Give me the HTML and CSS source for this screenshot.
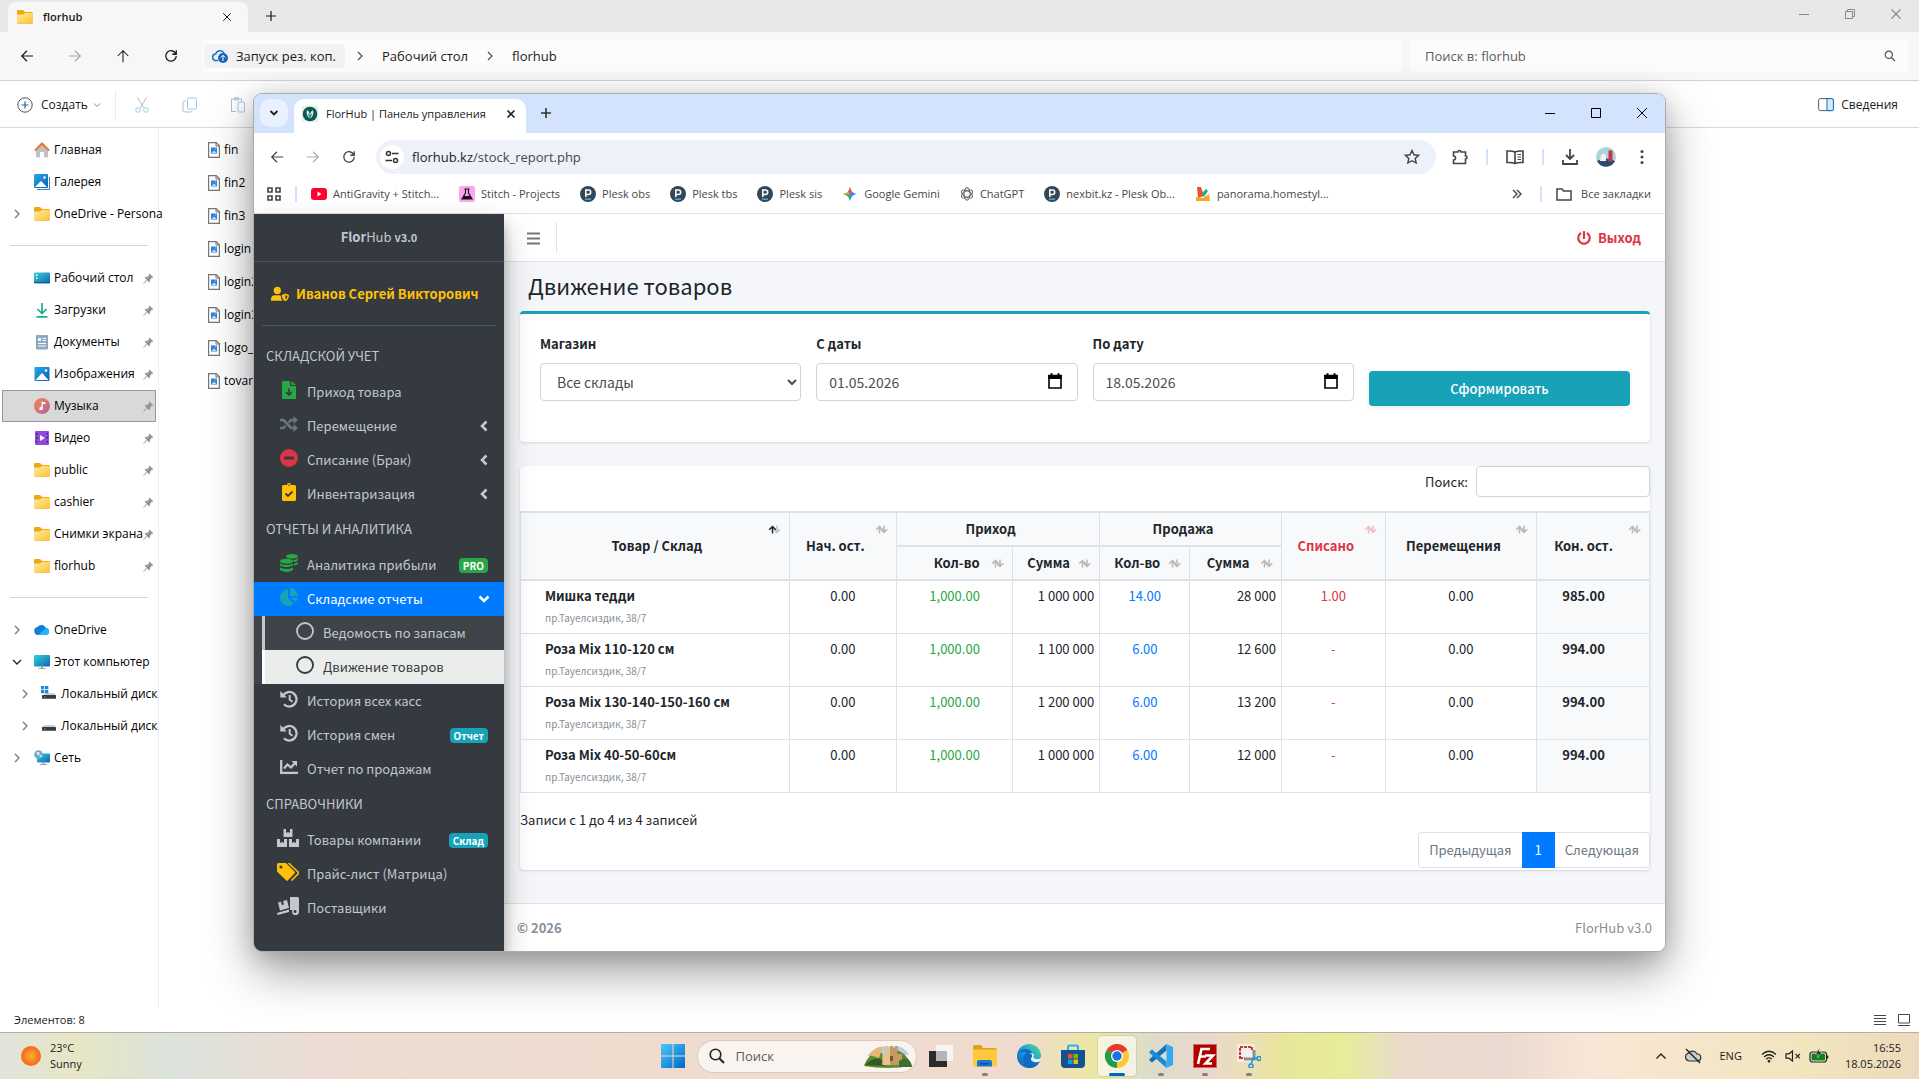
FILE: index.html
```html
<!DOCTYPE html>
<html lang="ru">
<head>
<meta charset="utf-8">
<title>FlorHub | Панель управления</title>
<link rel="stylesheet" href="styles.css">
</head>
<body>
<svg class="sprite" aria-hidden="true">
  <defs>
    <linearGradient id="gFolder" x1="0" y1="0" x2="1" y2="1"><stop offset="0" stop-color="#ffe9a6"/><stop offset="1" stop-color="#fdc32f"/></linearGradient>
    <linearGradient id="gBlue" x1="0" y1="0" x2="1" y2="1"><stop offset="0" stop-color="#27a9ec"/><stop offset="1" stop-color="#0560b6"/></linearGradient>
    <linearGradient id="gTeal" x1="0" y1="0" x2="1" y2="1"><stop offset="0" stop-color="#34d3e0"/><stop offset="1" stop-color="#0f63ad"/></linearGradient>
    <linearGradient id="gWin" x1="0" y1="0" x2="1" y2="1"><stop offset="0" stop-color="#4cc8fb"/><stop offset="1" stop-color="#0067c8"/></linearGradient>
    <linearGradient id="gMusic" x1="0" y1="0" x2="1" y2="1"><stop offset="0" stop-color="#f28a4b"/><stop offset="1" stop-color="#b0629f"/></linearGradient>
    <linearGradient id="gEdge" x1="0" y1="1" x2="1" y2="0"><stop offset="0" stop-color="#0c59a4"/><stop offset=".5" stop-color="#1b9de2"/><stop offset="1" stop-color="#5fdc7c"/></linearGradient>
  </defs>
  <symbol id="folder" viewBox="0 0 16 14"><path d="M1 0h5l2 2h6.500a1.500 1.500 0 0 1 1.500 1.500V6H0V1a1 1 0 0 1 1-1z" fill="#f0a80c"/><path d="M0 4.500h6l2-1.500h7a1 1 0 0 1 1 1v8.500a1 1 0 0 1-1 1H1a1 1 0 0 1-1-1z" fill="url(#gFolder)"/><path d="M0 12v.5a1 1 0 0 0 1 1h14a1 1 0 0 0 1-1V12a1 1 0 0 1-1 1H1a1 1 0 0 1-1-1z" fill="#e9a820"/></symbol>
  <symbol id="pin" viewBox="0 0 12 12"><path d="M7.200.6 11.400 4.800 10.300 5.300 9.600 5.200 7.900 7 7.700 9.400 6.600 10 4.500 7.900 1 11.400.3 11.500.4 10.800 3.900 7.300 2 5.300 2.500 4.300 5 4.100 6.800 2.300 6.600 1.500z" fill="#8d979f"/></symbol>
  <symbol id="chev" viewBox="0 0 8 12"><path d="M2 2l4 4-4 4" fill="none" stroke="currentColor" stroke-width="1.300"/></symbol>
  <symbol id="home" viewBox="0 0 16 16"><path d="M2 7l6-5 6 5v8.500h-4V10H6v5.500H2z" fill="#bfc2c4"/><path d="M.8 8.600 8 1.500l7.200 7.100" fill="none" stroke="#e8742a" stroke-width="2"/></symbol>
  <symbol id="picture" viewBox="0 0 16 16"><rect x=".5" y="1" width="15" height="14" rx="1" fill="url(#gBlue)"/><path d="M1.500 14 8 7l6.500 7z" fill="#fff"/><circle cx="12" cy="4.500" r="1.300" fill="#fff"/></symbol>
  <symbol id="gallery" viewBox="0 0 16 16"><path d="M3 15h12V3h1v13H3z" fill="#2f86c8"/><rect y="0" width="14" height="14" rx="1" fill="url(#gBlue)"/><path d="M1 13l6-6 6 6z" fill="#fff"/><circle cx="10.500" cy="3.500" r="1.200" fill="#fff"/></symbol>
  <symbol id="desk" viewBox="0 0 16 16"><rect y="2.500" width="16" height="11" rx="1" fill="url(#gTeal)"/><path d="M2 4.500h1.500V6H2zM2 7.500h1.500V9H2z" fill="#fff"/><path d="M0 12h16v.8H0z" fill="#0d4f86"/></symbol>
  <symbol id="down" viewBox="0 0 16 16"><path d="M8 1v10M3.500 7 8 11.500 12.500 7M2.500 14.800h11" fill="none" stroke="#1bb08c" stroke-width="1.700"/></symbol>
  <symbol id="doc" viewBox="0 0 16 16"><rect x="2" y="1" width="12" height="14.500" rx="1" fill="#8ea8c0"/><path d="M4 4h3v3H4zM8.500 4H12v1H8.500zM8.500 6H12v1H8.500zM4 9h8v1H4zM4 11.500h8v1H4z" fill="#fff"/></symbol>
  <symbol id="music" viewBox="0 0 16 16"><circle cx="8" cy="8" r="8" fill="url(#gMusic)"/><path d="M7.500 3.500l4 1v1.800L8.800 5.700v4.800a1.800 1.800 0 1 1-1.300-1.700z" fill="#fff"/></symbol>
  <symbol id="video" viewBox="0 0 16 16"><rect x="1" y="1" width="14" height="14" rx="1" fill="#8e4ae0"/><path d="M2 3h1.500v1.500H2zM2 7h1.500v1.500H2zM2 11h1.500v1.500H2zM12.500 3H14v1.500h-1.500zM12.500 7H14v1.500h-1.500zM12.500 11H14v1.500h-1.500z" fill="#3d1d78"/><path d="M6 5l5 3-5 3z" fill="#fff"/></symbol>
  <symbol id="cloud" viewBox="0 0 16 16"><path d="M4 13a4 4 0 0 1-.6-7.900A5 5 0 0 1 12 6a3.600 3.600 0 0 1 .5 7z" fill="#1479e0"/><path d="M4 13l8-7a3.600 3.600 0 0 1 .5 7z" fill="#24b4fa"/></symbol>
  <symbol id="pc" viewBox="0 0 16 16"><rect y="1" width="16" height="11.500" rx="1" fill="url(#gTeal)"/><path d="M7 12.500h2V14h2.500v1h-7v-1H7z" fill="#97a3ab"/></symbol>
  <symbol id="disk" viewBox="0 0 16 16"><path d="M2.500 7h11L15 9.500H1z" fill="#cfcfcf"/><rect x="1" y="9" width="14" height="3.800" rx=".5" fill="#3a3a3a"/><path d="M3 10.500h1.500v1H3z" fill="#3fd94b"/></symbol>
  <symbol id="sysdisk" viewBox="0 0 16 16"><path d="M5 7h8.500L15 9.500H2z" fill="#cfcfcf"/><rect x="1" y="9" width="14" height="3.800" rx=".5" fill="#3a3a3a"/><path d="M3 10.500h1.500v1H3z" fill="#3fd94b"/><path d="M0 0h3.300v3.300H0zM4 0h3.300v3.300H4zM0 4h3.300v3.300H0zM4 4h3.300v3.300H4z" fill="#1889dc"/></symbol>
  <symbol id="net" viewBox="0 0 16 16"><rect x="3" y="3.500" width="13" height="9" rx="1" fill="url(#gTeal)"/><path d="M8.500 12.500h2V14H13v1H6v-1h2.500z" fill="#97a3ab"/><circle cx="4.500" cy="4.500" r="4.300" fill="#6fa8c8"/><path d="M2 2.500l3-.5 1 2-2 1.500zM5 6l3-1-.5 2.500z" fill="#dff0f6"/></symbol>
  <symbol id="imgfile" viewBox="0 0 12 16"><path d="M.6.6h7.600l3.200 3.200v11.600H.6z" fill="#fff" stroke="#777" stroke-width="1.200"/><path d="M8 .6V4h3.400" fill="none" stroke="#777"/><rect x="3" y="5.500" width="6" height="6" fill="#2a86dc"/><path d="M3.500 11 6 8.500l2.500 2.500z" fill="#bfe3fb"/><circle cx="7.500" cy="7" r=".8" fill="#bda0f0"/></symbol>
  <symbol id="back" viewBox="0 0 16 16"><path d="M15 8H2M8 2 2 8l6 6" fill="none" stroke="currentColor" stroke-width="1.400"/></symbol>
  <symbol id="fwd" viewBox="0 0 16 16"><path d="M1 8h13M8 2l6 6-6 6" fill="none" stroke="currentColor" stroke-width="1.400"/></symbol>
  <symbol id="reload" viewBox="0 0 16 16"><path d="M13.500 5.500A6 6 0 1 0 14 8M14 1.500v4.500H9.500" fill="none" stroke="currentColor" stroke-width="1.500"/></symbol>
  <symbol id="x" viewBox="0 0 12 12"><path d="M1.500 1.500l9 9M10.500 1.500l-9 9" stroke="currentColor" stroke-width="1.200"/></symbol>
  <symbol id="plus" viewBox="0 0 12 12"><path d="M6 1v10M1 6h10" stroke="currentColor" stroke-width="1.200"/></symbol>
  <symbol id="plesk" viewBox="0 0 16 16"><circle cx="8" cy="8" r="8" fill="#33475b"/><path d="M5.800 11V4h2.700a2.200 2.200 0 0 1 0 4.400H6" fill="none" stroke="#fff" stroke-width="1.500"/><path d="M5 13.200h6" stroke="#53bce6" stroke-width="1.300"/></symbol>
  <symbol id="sort" viewBox="0 0 13 9"><path d="M4.500 8.500V1.500M1.200 4.800l3.300-3.300 3.300 3.300M9 .5v7M5.800 4.200 9 7.500l3.200-3.300" fill="none" stroke="currentColor" stroke-width="1.500"/></symbol>
  <symbol id="angle" viewBox="0 0 8 12"><path d="M6.500 1.500 2 6l4.500 4.500" fill="none" stroke="currentColor" stroke-width="2.600"/></symbol>
  <symbol id="ring" viewBox="0 0 18 18"><circle cx="9" cy="9" r="8" fill="none" stroke="currentColor" stroke-width="1.800"/></symbol>
  <symbol id="history" viewBox="0 0 18 18"><path d="M3.200 5.200A7.300 7.300 0 1 1 4 14.300" fill="none" stroke="currentColor" stroke-width="2.300"/><path d="M.3 1v6.500h6.500z" fill="currentColor"/><path d="M9.700 5v4.800l2.800 2" fill="none" stroke="currentColor" stroke-width="2"/></symbol>
  <symbol id="cal" viewBox="0 0 14 16"><path d="M1 2.500h12V15H1z" fill="none" stroke="#000" stroke-width="1.600"/><path d="M.2 2h13.600v4H.2zM2.500.3h2V3h-2zM9.500.3h2V3h-2z"/></symbol>
</svg>

<div class="desktop">
  <main class="explorer">
    <div class="ex-tabs">
      <div class="ex-tab"><svg class="i16"><use href="#folder"/></svg><span>florhub</span><button class="ib push" aria-label="Закрыть вкладку"><svg class="i10"><use href="#x"/></svg></button></div>
      <button class="ib ex-plus" aria-label="Новая вкладка"><svg class="i12"><use href="#plus"/></svg></button>
      <div class="ex-winbtns">
        <button class="ib" aria-label="Свернуть"><svg class="i10" viewBox="0 0 10 10"><path d="M0 5.500h10" stroke="#888"/></svg></button>
        <button class="ib" aria-label="Восстановить"><svg class="i10" viewBox="0 0 10 10"><path d="M.5 2.500h7v7h-7zM2.500 2V.5h7v7H8" fill="none" stroke="#888"/></svg></button>
        <button class="ib" aria-label="Закрыть"><svg class="i12"><use href="#x"/></svg></button>
      </div>
    </div>
    <div class="ex-nav">
      <div class="ex-arrows">
        <button class="ib" aria-label="Назад"><svg class="i14"><use href="#back"/></svg></button>
        <button class="ib dim" aria-label="Вперед"><svg class="i14"><use href="#fwd"/></svg></button>
        <button class="ib" aria-label="Вверх"><svg class="i14" viewBox="0 0 16 16"><path d="M8 15V2M2 8l6-6 6 6" fill="none" stroke="currentColor" stroke-width="1.200"/></svg></button>
        <button class="ib" aria-label="Обновить"><svg class="i14"><use href="#reload"/></svg></button>
      </div>
      <div class="ex-path">
        <a class="chip" href="#"><svg class="i16" viewBox="0 0 16 16"><path d="M6 12.500H4a3.200 3.200 0 0 1-.3-6.400A4.500 4.500 0 0 1 12 5" fill="none" stroke="#1a6fc4" stroke-width="1.500"/><circle cx="11" cy="10" r="5" fill="#1565b8"/><path d="M11 13V7.500M8.800 9.500 11 7.300l2.200 2.200" fill="none" stroke="#fff"/></svg>Запуск рез. коп.</a>
        <svg class="crumb"><use href="#chev"/></svg><a href="#">Рабочий стол</a>
        <svg class="crumb"><use href="#chev"/></svg><a href="#">florhub</a>
      </div>
      <label class="ex-search"><input type="text" placeholder="Поиск в: florhub" aria-label="Поиск в: florhub"><svg class="i12" viewBox="0 0 12 12"><circle cx="4.800" cy="4.800" r="3.600" fill="none" stroke="#555" stroke-width="1.200"/><path d="M7.500 7.500 11 11" stroke="#555" stroke-width="1.200"/></svg></label>
    </div>
    <div class="ex-cmd">
      <button class="ib create"><svg class="i16" viewBox="0 0 16 16"><circle cx="8" cy="8" r="7.200" fill="none" stroke="#555"/><path d="M8 4.500v7M4.500 8h7" stroke="#0f6cbd" stroke-width="1.200"/></svg>Создать<svg class="i8" viewBox="0 0 8 8"><path d="M1 2.500l3 3 3-3" fill="none" stroke="#888"/></svg></button>
      <span class="sep"></span>
      <div class="ex-tools">
        <svg class="i16" viewBox="0 0 16 16"><path d="M3.500.5 10 11M12.500.5 6 11" fill="none" stroke="#bbb"/><circle cx="4" cy="13" r="2.300" fill="none" stroke="#9ccbee"/><circle cx="12" cy="13" r="2.300" fill="none" stroke="#9ccbee"/></svg>
        <svg class="i16" viewBox="0 0 16 16"><path d="M4 4H2.500A1.500 1.500 0 0 0 1 5.500V13a2 2 0 0 0 2 2h5.500a1.500 1.500 0 0 0 1.500-1.500" fill="none" stroke="#bbb"/><rect x="5.500" y="1" width="9" height="11" rx="1.500" fill="none" stroke="#9ccbee"/></svg>
        <svg class="i16" viewBox="0 0 16 16"><path d="M6 14.500H1.500V2h10v2M4.500.8h4v2h-4z" fill="none" stroke="#bbb"/><rect x="8" y="5" width="6.500" height="10" rx="1" fill="none" stroke="#9ccbee"/></svg>
      </div>
      <button class="ib details"><svg class="i16" viewBox="0 0 16 14"><rect x=".6" y=".6" width="14.800" height="12" rx="2" fill="none" stroke="#555"/><path d="M9 .6h5a1.500 1.500 0 0 1 1.400 1.500v9a1.500 1.500 0 0 1-1.400 1.500H9z" fill="#d6eafa" stroke="#0f6cbd"/></svg>Сведения</button>
    </div>
    <div class="ex-body">
      <nav class="ex-tree">
        <a href="#"><svg class="i16"><use href="#home"/></svg><span>Главная</span></a>
        <a href="#"><svg class="i16"><use href="#gallery"/></svg><span>Галерея</span></a>
        <a href="#" class="branch"><svg class="tw"><use href="#chev"/></svg><svg class="i16"><use href="#folder"/></svg><span>OneDrive - Persona</span></a>
        <hr>
        <a href="#"><svg class="i16"><use href="#desk"/></svg><span>Рабочий стол</span><svg class="pin"><use href="#pin"/></svg></a>
        <a href="#"><svg class="i16"><use href="#down"/></svg><span>Загрузки</span><svg class="pin"><use href="#pin"/></svg></a>
        <a href="#"><svg class="i16"><use href="#doc"/></svg><span>Документы</span><svg class="pin"><use href="#pin"/></svg></a>
        <a href="#"><svg class="i16"><use href="#picture"/></svg><span>Изображения</span><svg class="pin"><use href="#pin"/></svg></a>
        <a href="#" class="current"><svg class="i16"><use href="#music"/></svg><span>Музыка</span><svg class="pin"><use href="#pin"/></svg></a>
        <a href="#"><svg class="i16"><use href="#video"/></svg><span>Видео</span><svg class="pin"><use href="#pin"/></svg></a>
        <a href="#"><svg class="i16"><use href="#folder"/></svg><span>public</span><svg class="pin"><use href="#pin"/></svg></a>
        <a href="#"><svg class="i16"><use href="#folder"/></svg><span>cashier</span><svg class="pin"><use href="#pin"/></svg></a>
        <a href="#"><svg class="i16"><use href="#folder"/></svg><span>Снимки экрана</span><svg class="pin"><use href="#pin"/></svg></a>
        <a href="#"><svg class="i16"><use href="#folder"/></svg><span>florhub</span><svg class="pin"><use href="#pin"/></svg></a>
        <hr>
        <a href="#" class="branch"><svg class="tw"><use href="#chev"/></svg><svg class="i16"><use href="#cloud"/></svg><span>OneDrive</span></a>
        <a href="#" class="branch"><svg class="tw open"><use href="#chev"/></svg><svg class="i16"><use href="#pc"/></svg><span>Этот компьютер</span></a>
        <a href="#" class="branch deep"><svg class="tw"><use href="#chev"/></svg><svg class="i16"><use href="#sysdisk"/></svg><span>Локальный диск</span></a>
        <a href="#" class="branch deep"><svg class="tw"><use href="#chev"/></svg><svg class="i16"><use href="#disk"/></svg><span>Локальный диск</span></a>
        <a href="#" class="branch"><svg class="tw"><use href="#chev"/></svg><svg class="i16"><use href="#net"/></svg><span>Сеть</span></a>
      </nav>
      <ul class="ex-files">
        <li><svg><use href="#imgfile"/></svg>fin</li>
        <li><svg><use href="#imgfile"/></svg>fin2</li>
        <li><svg><use href="#imgfile"/></svg>fin3</li>
        <li><svg><use href="#imgfile"/></svg>login</li>
        <li><svg><use href="#imgfile"/></svg>login2</li>
        <li><svg><use href="#imgfile"/></svg>login3</li>
        <li><svg><use href="#imgfile"/></svg>logo_</li>
        <li><svg><use href="#imgfile"/></svg>tovaro</li>
      </ul>
    </div>
    <div class="ex-status"><span>Элементов: 8</span><span class="views">
      <svg class="i12" viewBox="0 0 12 12"><path d="M0 1.500h12M0 4.500h12M0 7.500h12M0 10.500h12" stroke="#444"/></svg>
      <svg class="i12" viewBox="0 0 12 12"><path d="M.5.5h11v8.500H.5zM0 11.500h12" fill="none" stroke="#444"/></svg></span></div>
  </main>

  <section class="chrome">
    <div class="ch-strip">
      <button class="ib ch-menu" aria-label="Поиск вкладок"><svg class="i10" viewBox="0 0 10 10"><path d="M1.500 3 5 6.500 8.500 3" fill="none" stroke="#1f1f1f" stroke-width="1.800"/></svg></button>
      <div class="ch-tab">
        <svg class="i16" viewBox="0 0 16 16"><rect width="16" height="16" fill="#e9eeee"/><circle cx="8" cy="8" r="7.300" fill="#0b5a56"/><path d="M5 4q-1.500 6 3 8.500Q12.500 10 11 4 9 5 8 8 7 5 5 4z" fill="#d9ecea"/><path d="M8 12V7.500M6 8l2 3 2-3" fill="none" stroke="#0b5a56" stroke-width=".8"/></svg>
        <span>FlorHub | Панель управления</span>
        <button class="ib push" aria-label="Закрыть вкладку"><svg class="i10" viewBox="0 0 10 10"><path d="M1.500 1.500l7 7M8.500 1.500l-7 7" stroke="#1f1f1f" stroke-width="1.600"/></svg></button>
      </div>
      <button class="ib ch-plus" aria-label="Новая вкладка"><svg class="i12" viewBox="0 0 12 12"><path d="M6 1v10M1 6h10" stroke="#333" stroke-width="1.600"/></svg></button>
      <div class="ch-winbtns">
        <button class="ib" aria-label="Свернуть"><svg class="i10" viewBox="0 0 10 10"><path d="M0 5.500h10" stroke="#000"/></svg></button>
        <button class="ib" aria-label="Развернуть"><svg class="i10" viewBox="0 0 10 10"><path d="M.5.5h9v9h-9z" fill="none" stroke="#000"/></svg></button>
        <button class="ib" aria-label="Закрыть"><svg class="i10" viewBox="0 0 10 10"><path d="M0 0l10 10M10 0 0 10" stroke="#000"/></svg></button>
      </div>
    </div>
    <div class="ch-bar">
      <div class="ch-arrows">
        <button class="ib" aria-label="Назад"><svg class="i14"><use href="#back"/></svg></button>
        <button class="ib dim" aria-label="Вперед"><svg class="i14"><use href="#fwd"/></svg></button>
        <button class="ib" aria-label="Обновить"><svg class="i14"><use href="#reload"/></svg></button>
      </div>
      <div class="ch-url">
        <span class="tune"><svg class="i14" viewBox="0 0 14 14"><circle cx="3.500" cy="3.500" r="2" fill="none" stroke="#333" stroke-width="1.500"/><path d="M7 3.500h6.500M.5 10.500H7" stroke="#333" stroke-width="1.500"/><circle cx="10.500" cy="10.500" r="2" fill="none" stroke="#333" stroke-width="1.500"/></svg></span>
        <span class="addr">florhub.kz<i>/stock_report.php</i></span>
        <svg class="i16 push" viewBox="0 0 16 16"><path d="M8 1.500l2 4.300 4.600.5-3.400 3.100 1 4.600L8 11.700 3.800 14l1-4.600L1.400 6.300 6 5.800z" fill="none" stroke="#444" stroke-width="1.400"/></svg>
      </div>
      <div class="ch-ext">
        <svg class="i16" viewBox="0 0 16 16"><path d="M1.500 3H6a1.500 1.500 0 0 1 3 0h4.500v4a1.500 1.500 0 0 1 0 3v4.500h-12V11a2 2 0 0 0 0-4z" fill="none" stroke="#444" stroke-width="1.600"/></svg>
        <span class="vsep"></span>
        <svg class="i18" viewBox="0 0 18 16"><path d="M9 3C7 2 4 1.800 1 2v11.500c3-.2 6 0 8 1 2-1 5-1.200 8-1V2c-3-.2-6 0-8 1zv11" fill="none" stroke="#444" stroke-width="1.600"/><path d="M11.500 5.500h3.500M11.500 8h3.500M11.500 10.500h3.500" stroke="#444"/></svg>
        <span class="vsep"></span>
        <svg class="i16" viewBox="0 0 16 16"><path d="M8 0v9.500M4 6l4 4 4-4M1 11v4h14v-4" fill="none" stroke="#444" stroke-width="1.800"/></svg>
        <svg class="i20" viewBox="0 0 20 20"><circle cx="10" cy="10" r="10" fill="#a9d5da"/><path d="M1 14q9-5 18 0a10 10 0 0 1-18 0z" fill="#2c4a6e"/><path d="M12.500 3.500h4v11h-4z" fill="#c8374a"/><path d="M5 8q3-3 5 0v6H4z" fill="#f2f2f0"/></svg>
        <svg class="i16" viewBox="0 0 16 16"><circle cx="8" cy="2.500" r="1.500" fill="#444"/><circle cx="8" cy="8" r="1.500" fill="#444"/><circle cx="8" cy="13.500" r="1.500" fill="#444"/></svg>
      </div>
    </div>
    <nav class="ch-marks">
      <svg class="i14" viewBox="0 0 14 14"><path d="M1 1h4v4H1zM9 1h4v4H9zM1 9h4v4H1zM9 9h4v4H9z" fill="none" stroke="#444" stroke-width="1.600"/></svg>
      <span class="vsep"></span>
      <div class="marks">
        <a href="#"><svg class="i16" viewBox="0 0 16 16"><rect y="2" width="16" height="12" rx="3" fill="#ff0033"/><path d="M6.500 5.500v5l4-2.500z" fill="#fff"/></svg>AntiGravity + Stitch...</a>
        <a href="#"><svg class="i16" viewBox="0 0 16 16"><rect width="16" height="16" rx="2" fill="#f9a8f0"/><path d="M6.500 3v4L3 13h10L9.500 7V3M5.500 3h5" fill="none" stroke="#1b1020" stroke-width="1.200"/><path d="M5 10h6l2 3H3z" fill="#1b1020"/></svg>Stitch - Projects</a>
        <a href="#"><svg class="i16"><use href="#plesk"/></svg>Plesk obs</a>
        <a href="#"><svg class="i16"><use href="#plesk"/></svg>Plesk tbs</a>
        <a href="#"><svg class="i16"><use href="#plesk"/></svg>Plesk sis</a>
        <a href="#"><svg class="i16" viewBox="0 0 16 16"><path d="M8 1q1 6 7 7-6 1-7 7-1-6-7-7 6-1 7-7z" fill="#4285f4"/><path d="M8 1q-1 6-7 7l7 0z" fill="#f9b32b"/><path d="M8 1q.5 3 2 5L8 8 6 6q1.500-2 2-5z" fill="#ea4e3f"/><path d="M1 8q6 1 7 7V8z" fill="#35b26b"/></svg>Google Gemini</a>
        <a href="#"><svg class="i14" viewBox="0 0 16 16"><g fill="none" stroke="#666" stroke-width="1.300"><ellipse cx="8" cy="8" rx="3.500" ry="7"/><ellipse cx="8" cy="8" rx="3.500" ry="7" transform="rotate(60 8 8)"/><ellipse cx="8" cy="8" rx="3.500" ry="7" transform="rotate(120 8 8)"/></g></svg>ChatGPT</a>
        <a href="#"><svg class="i16"><use href="#plesk"/></svg>nexbit.kz - Plesk Ob...</a>
        <a href="#"><svg class="i16" viewBox="0 0 16 16"><path d="M2 1l4 0 3 9-6 2z" fill="#e8542c"/><path d="M7 7l4-4 2 2-4 6z" fill="#2aa6a0"/><path d="M1 11l7 1 6-4 1 7H1z" fill="#f6a81c"/></svg>panorama.homestyl...</a>
      </div>
      <button class="ib push more" aria-label="Ещё закладки"><svg class="i10" viewBox="0 0 10 10"><path d="M1 1l4 4-4 4M5 1l4 4-4 4" fill="none" stroke="#444" stroke-width="1.400"/></svg></button>
      <span class="vsep"></span>
      <a href="#" class="all"><svg class="i16" viewBox="0 0 16 16"><path d="M1 3h5l1.500 2H15v9H1z" fill="none" stroke="#444" stroke-width="1.500"/></svg>Все закладки</a>
    </nav>

    <div class="page">
      <aside class="side">
        <a class="brand" href="#"><b>Flor</b>Hub <b class="ver">v3.0</b></a>
        <a class="user" href="#"><svg class="i18" viewBox="0 0 20 16"><circle cx="7" cy="4" r="4" fill="currentColor"/><path d="M0 15.500V14q0-4.500 4.500-4.500h5q1.500 0 1.500.6 0 3.500 1.800 5.400z" fill="currentColor"/><path d="M16 7.500l4 1.500q0 5-4 7-4-2-4-7z" fill="currentColor"/><path d="M16 9.300v4.800q2.200-1.500 2.300-4z" fill="#343a40"/></svg>Иванов Сергей Викторович</a>
        <nav class="menu">
          <h2>СКЛАДСКОЙ УЧЕТ</h2>
          <a href="#"><svg class="ic green" viewBox="0 0 18 18"><path d="M3 0h7v5h6v12a1 1 0 0 1-1 1H3a1 1 0 0 1-1-1V1a1 1 0 0 1 1-1zM11.500 0 16 4h-4.500z" fill="currentColor"/><path d="M9 7.500v6M6 11l3 3 3-3" fill="none" stroke="#343a40" stroke-width="1.600"/></svg>Приход товара</a>
          <a href="#"><svg class="ic gray" viewBox="0 0 18 18"><path d="M0 5h3.500l7.500 8h4M0 13h3.500l2-2.200M8.500 7.500 11 5h4" fill="none" stroke="currentColor" stroke-width="2.600"/><path d="M13.500 1 18 5l-4.500 4zM13.500 9l4.500 4-4.500 4z" fill="currentColor"/></svg>Перемещение<svg class="ang"><use href="#angle"/></svg></a>
          <a href="#"><svg class="ic red" viewBox="0 0 18 18"><circle cx="9" cy="9" r="9" fill="currentColor"/><rect x="4" y="7.500" width="10" height="3" rx=".5" fill="#343a40"/></svg>Списание (Брак)<svg class="ang"><use href="#angle"/></svg></a>
          <a href="#"><svg class="ic yellow" viewBox="0 0 18 18"><path d="M3.500 2H7a2 2 0 0 1 4 0h3.500A1.500 1.500 0 0 1 16 3.500v13a1.500 1.500 0 0 1-1.500 1.500h-11A1.500 1.500 0 0 1 2 16.500v-13A1.500 1.500 0 0 1 3.500 2z" fill="currentColor"/><path d="M5.500 10.500 8 13l4.500-4.500" fill="none" stroke="#343a40" stroke-width="1.800"/><circle cx="9" cy="2.200" r=".8" fill="#343a40"/></svg>Инвентаризация<svg class="ang"><use href="#angle"/></svg></a>
          <h2>ОТЧЕТЫ И АНАЛИТИКА</h2>
          <a href="#"><svg class="ic green" viewBox="0 0 18 18"><g fill="currentColor"><ellipse cx="12" cy="2.300" rx="6" ry="2.300"/><path d="M13 6q4-.3 5-1.700v2Q17 7.800 14 8zM14 9.500q3-.3 4-1.700v2q-1 1.400-4 1.700z"/><ellipse cx="6.500" cy="7.300" rx="6.500" ry="2.500"/><path d="M0 9.500q6.500 3 13 0v2q-6.500 3-13 0zM0 13.500q6.500 3 13 0V16q-6.500 4-13 0z"/></g></svg>Аналитика прибыли<span class="badge success">PRO</span></a>
          <a href="#" class="active"><svg class="ic teal" viewBox="0 0 18 18"><path d="M8 1v9l6 6A8.500 8.500 0 1 1 8 1z" fill="currentColor"/><path d="M10 0a8 8 0 0 1 8 8h-8zM10.500 9.500H18a8 8 0 0 1-2.300 5z" fill="currentColor"/></svg>Складские отчеты<svg class="ang down"><use href="#angle"/></svg></a>
          <div class="sub">
            <a href="#"><svg class="ic"><use href="#ring"/></svg>Ведомость по запасам</a>
            <a href="#" class="here"><svg class="ic"><use href="#ring"/></svg>Движение товаров</a>
          </div>
          <a href="#"><svg class="ic"><use href="#history"/></svg>История всех касс</a>
          <a href="#"><svg class="ic"><use href="#history"/></svg>История смен<span class="badge teal-bg">Отчет</span></a>
          <a href="#"><svg class="ic" viewBox="0 0 18 18"><path d="M1.200 2v12.800H18" fill="none" stroke="currentColor" stroke-width="2.300"/><path d="M4 10.500l3.500-4 3.500 3 4-4.500" fill="none" stroke="currentColor" stroke-width="2.200"/><path d="M11.500 3H17v5.500z" fill="currentColor"/></svg>Отчет по продажам</a>
          <h2>СПРАВОЧНИКИ</h2>
          <a href="#"><svg class="ic wide" viewBox="0 0 22 18"><path d="M6.500 0H9v4l2-1 2 1V0h2.500v8h-9zM0 10h3v4l2-1 2 1v-4h3v8H0zM12 10h3v4l2-1 2 1v-4h3v8H12z" fill="currentColor"/></svg>Товары компании<span class="badge teal-bg">Склад</span></a>
          <a href="#"><svg class="ic wide yellow" viewBox="0 0 22 18"><path d="M0 1.500Q0 0 1.500 0H9l8.500 8.500q1 1 0 2L11 17.300q-1 1-2 0L0 8.500z" fill="currentColor"/><path d="M11.500 0l9.500 9q1 1 0 2l-6.500 6.500" fill="none" stroke="currentColor" stroke-width="1.600"/><circle cx="4" cy="4" r="1.600" fill="#343a40"/></svg>Прайс-лист (Матрица)</a>
          <a href="#"><svg class="ic wide" viewBox="0 0 22 18"><path d="M13 0h7.500Q22 0 22 1.500V15a3.500 3.500 0 1 1-6.500-2H13zM0 16l12-3.500V15L.5 18zM1 5.500 4 4.700l1 3.500 2-1L6 4l4-1 2 8-9 2.500z" fill="currentColor"/><circle cx="18" cy="14.500" r="1.500" fill="#343a40"/></svg>Поставщики</a>
        </nav>
      </aside>
      <div class="main">
        <header class="top">
          <button class="ib burger" aria-label="Меню"><svg class="i14" viewBox="0 0 14 14"><path d="M0 2.500h13M0 7.500h13M0 12.500h13" stroke="#777" stroke-width="2"/></svg></button>
          <span class="rule"></span>
          <a class="exit" href="#"><svg class="i14" viewBox="0 0 512 512"><path fill="currentColor" d="M400 54.100c63 45 104 118.600 104 201.900 0 136.800-110.800 247.700-247.500 248C120 504.300 8.200 393 8 256.400 7.900 173.100 48.900 99.300 111.800 54.200c11.700-8.300 28-4.800 35 7.700L162.600 90c5.900 10.500 3.100 23.800-6.600 31-41.500 30.800-68 79.600-68 134.900-.1 92.300 74.500 168.100 168 168.100 91.600 0 168.600-74.200 168-169.100-.3-51.800-24.700-101.800-68.100-134-9.700-7.200-12.400-20.500-6.500-30.900l15.800-28.100c7-12.400 23.200-16.100 34.800-7.800zM296 264V24c0-13.300-10.700-24-24-24h-32c-13.300 0-24 10.700-24 24v240c0 13.300 10.700 24 24 24h32c13.300 0 24-10.700 24-24z"/></svg>Выход</a>
        </header>
        <div class="content">
          <h1>Движение товаров</h1>
          <form class="card filter">
            <div class="field"><label for="shop">Магазин</label><select id="shop"><option>Все склады</option></select></div>
            <div class="field"><label for="from">С даты</label><div class="date"><input id="from" type="text" value="01.05.2026"><svg><use href="#cal"/></svg></div></div>
            <div class="field"><label for="to">По дату</label><div class="date"><input id="to" type="text" value="18.05.2026"><svg><use href="#cal"/></svg></div></div>
            <button type="button" class="go">Сформировать</button>
          </form>
          <div class="card report">
            <div class="find"><label for="q">Поиск:</label><input id="q" type="search"></div>
            <table>
              <colgroup><col class="c1"><col class="c2"><col class="c3"><col class="c4"><col class="c5"><col class="c6"><col class="c7"><col class="c8"><col class="c9"></colgroup>
              <thead>
                <tr><th rowspan="2" class="lead">Товар / Склад<svg class="sort asc" viewBox="0 0 13 9"><path d="M9 .5v7M5.800 4.200 9 7.500l3.200-3.300" fill="none" stroke="#bfc2c5" stroke-width="1.500"/><path d="M4.500 8.500V1.500M1.200 4.800l3.300-3.300 3.300 3.300" fill="none" stroke="#212529" stroke-width="1.500"/></svg></th><th rowspan="2">Нач. ост.<svg class="sort"><use href="#sort"/></svg></th><th colspan="2">Приход</th><th colspan="2">Продажа</th><th rowspan="2" class="loss">Списано<svg class="sort"><use href="#sort"/></svg></th><th rowspan="2">Перемещения<svg class="sort"><use href="#sort"/></svg></th><th rowspan="2" class="end">Кон. ост.<svg class="sort"><use href="#sort"/></svg></th></tr>
                <tr><th class="lead">Кол-во<svg class="sort"><use href="#sort"/></svg></th><th>Сумма<svg class="sort"><use href="#sort"/></svg></th><th>Кол-во<svg class="sort"><use href="#sort"/></svg></th><th>Сумма<svg class="sort"><use href="#sort"/></svg></th></tr>
              </thead>
              <tbody>
                <tr><td class="name"><b>Мишка тедди</b><small>пр.Тауелсиздик, 38/7</small></td><td>0.00</td><td class="in">1,000.00</td><td class="sum">1 000 000</td><td class="out">14.00</td><td class="sum">28 000</td><td class="loss">1.00</td><td>0.00</td><td class="end">985.00</td></tr>
                <tr><td class="name"><b>Роза Mix 110-120 см</b><small>пр.Тауелсиздик, 38/7</small></td><td>0.00</td><td class="in">1,000.00</td><td class="sum">1 100 000</td><td class="out">6.00</td><td class="sum">12 600</td><td class="loss">-</td><td>0.00</td><td class="end">994.00</td></tr>
                <tr><td class="name"><b>Роза Mix 130-140-150-160 см</b><small>пр.Тауелсиздик, 38/7</small></td><td>0.00</td><td class="in">1,000.00</td><td class="sum">1 200 000</td><td class="out">6.00</td><td class="sum">13 200</td><td class="loss">-</td><td>0.00</td><td class="end">994.00</td></tr>
                <tr><td class="name"><b>Роза Mix 40-50-60см</b><small>пр.Тауелсиздик, 38/7</small></td><td>0.00</td><td class="in">1,000.00</td><td class="sum">1 000 000</td><td class="out">6.00</td><td class="sum">12 000</td><td class="loss">-</td><td>0.00</td><td class="end">994.00</td></tr>
              </tbody>
            </table>
            <p class="info">Записи с 1 до 4 из 4 записей</p>
            <div class="pager"><button type="button">Предыдущая</button><button type="button" class="on">1</button><button type="button">Следующая</button></div>
          </div>
        </div>
        <footer class="foot"><b>© 2026</b><span>FlorHub v3.0</span></footer>
      </div>
    </div>
  </section>

  <div class="taskbar">
    <div class="weather"><svg class="i20" viewBox="0 0 20 20"><defs><radialGradient id="sun"><stop offset="0" stop-color="#ffb02e"/><stop offset="1" stop-color="#f0681c"/></radialGradient></defs><circle cx="10" cy="10" r="10" fill="url(#sun)"/></svg><span>23°C<br>Sunny</span></div>
    <div class="tasks">
      <button class="task" aria-label="Пуск"><svg class="i24" viewBox="0 0 24 24"><path d="M0 0h11.500v11.500H0zM12.500 0H24v11.500H12.500zM0 12.500h11.500V24H0zM12.500 12.500H24V24H12.500z" fill="url(#gWin)"/></svg></button>
      <label class="tsearch"><svg class="i16" viewBox="0 0 16 16"><circle cx="6.500" cy="6.500" r="5.300" fill="none" stroke="#222" stroke-width="1.600"/><path d="M10.500 10.500 15 15" stroke="#222" stroke-width="2"/></svg><input type="text" placeholder="Поиск" aria-label="Поиск"><svg class="castle" viewBox="0 0 50 24"><path d="M4 12Q14 0 24 3q16-4 22 8z" fill="#b9cfe8"/><path d="M1 22q4-12 15-16l5 6 6-6q14-2 22 16-25 4-48 0z" fill="#5d8a2e"/><path d="M2 21q8-8 16-6l4 7z" fill="#2e5c24"/><path d="M6 11q6-9 14-8l-4 11z" fill="#e7b96f"/><path d="M22 2h3v2h2V2h3v2h2V2h3l-1 8h5v11H19V10h4z" fill="#c79a63"/><path d="M22 2h3v2h2v17h-7V10h3z" fill="#e6c490"/><path d="M27 12h3v5h-3z" fill="#7a5634"/><path d="M36 17q8-6 12 2l1 4H36z" fill="#3a7030"/></svg></label>
      <button class="task" aria-label="Представление задач"><svg class="i24" viewBox="0 0 24 24"><rect x="7" y="1" width="17" height="16" fill="#f4f4f4"/><rect y="7" width="18" height="16" fill="#2b2b2b"/><rect x="7" y="7" width="11" height="10" fill="#b5b5b5"/></svg></button>
      <button class="task run" aria-label="Проводник"><svg class="i24" viewBox="0 0 24 24"><path d="M0 3q0-2 2-2h6l2 3h12q2 0 2 2v4H0z" fill="#e0a01a"/><path d="M0 5.500h24v15q0 2-2 2H2q-2 0-2-2z" fill="#fbc93b"/><path d="M4 22.500V18q0-2 2-2h11q2 0 2 2v4.500z" fill="#1877d2"/><path d="M7 19h9v1.500H7z" fill="#0c4f96"/></svg></button>
      <button class="task" aria-label="Edge"><svg class="i24" viewBox="0 0 24 24"><circle cx="12" cy="12" r="12" fill="url(#gEdge)"/><path d="M1 9q5-6 11-3 5 3 3 7-3 3 2 5 4 1 6-1-4 8-12 7Q6 22 6 15q0-4 4-6Q5 7 1 9z" fill="#0f6ac0"/><path d="M12 9q4 1 3 4-3 3 2 5 4 1 6-1 1-1 1-4-1 3-5 2-4-1-2-4 0-2-5-2z" fill="#e9f4ee"/></svg></button>
      <button class="task" aria-label="Store"><svg class="i24" viewBox="0 0 24 24"><path d="M7 7V3q0-1.500 1.500-1.500h7Q17 1.500 17 3v4" fill="none" stroke="#25b3f0" stroke-width="2"/><path d="M0 6h24v14q0 4-4 4H4q-4 0-4-4z" fill="#15508f"/><path d="M7 10h4.500v4.500H7z" fill="#f25022"/><path d="M12.500 10H17v4.500h-4.500z" fill="#7fba00"/><path d="M7 15.500h4.500V20H7z" fill="#00a4ef"/><path d="M12.500 15.500H17V20h-4.500z" fill="#ffb900"/></svg></button>
      <button class="task run front" aria-label="Chrome"><svg class="i24" viewBox="0 0 24 24"><path d="M12 12 1.600 6A12 12 0 0 1 22.400 6z" fill="#e33b2e"/><path d="M12 12 22.400 6A12 12 0 0 1 12 24z" fill="#fcc934"/><path d="M12 12v12A12 12 0 0 1 1.600 6z" fill="#1e9e49"/><circle cx="12" cy="12" r="6" fill="#fff"/><circle cx="12" cy="12" r="4.700" fill="#1a73e8"/></svg></button>
      <button class="task run" aria-label="VS Code"><svg class="i24" viewBox="0 0 24 24"><path d="M17.500 0v6.500L3 18.500.5 16.500v-1.500z" fill="#1173ba"/><path d="M17.500 24v-6.500L3 5.500.5 7.500V9z" fill="#1f8ad2"/><path d="M17.500 0 24 3v18l-6.500 3z" fill="#32a9f2"/></svg></button>
      <button class="task run" aria-label="FileZilla"><svg class="i24" viewBox="0 0 24 24"><rect width="24" height="24" fill="#b00000"/><rect x=".5" y=".5" width="23" height="23" fill="none" stroke="#f3d0c8" stroke-dasharray="1 1"/><path d="M5 20 8.500 5H17M6.500 12.500H13M12 11.500h8l-7.500 8H19" fill="none" stroke="#fff" stroke-width="2.600"/></svg></button>
      <button class="task run" aria-label="Ножницы"><svg class="i24" viewBox="0 0 24 24"><rect width="18" height="18" rx="2" fill="#f1f1f3"/><path d="M3 15V3h12v4M3 14h5" fill="none" stroke="#d43a12" stroke-width="2.200" stroke-dasharray="3 1"/><path d="M7 15h10V6" fill="none" stroke="#8a8f95" stroke-width="3"/><circle cx="22" cy="14.500" r="2" fill="none" stroke="#1d94dc" stroke-width="1.500"/><circle cx="14" cy="22" r="2" fill="none" stroke="#1d94dc" stroke-width="1.500"/><path d="M14 20l2-5 4-1" fill="none" stroke="#1d94dc" stroke-width="1.500"/></svg></button>
    </div>
    <div class="tray">
      <svg class="i12" viewBox="0 0 12 12"><path d="M1.500 8.500 6 4l4.500 4.500" fill="none" stroke="#222" stroke-width="1.400"/></svg>
      <svg class="i18 onedrive" viewBox="0 0 18 16"><path d="M5 13a4 4 0 0 1-.5-7.800A5 5 0 0 1 13 6a3.500 3.500 0 0 1 .5 7z" fill="#c9cdd4" stroke="#333" stroke-width="1.200"/><path d="M2 1l14 14" stroke="#222" stroke-width="1.400"/></svg>
      <span class="lang">ENG</span>
      <svg class="i16" viewBox="0 0 16 16"><path d="M1 6.500q7-6.500 14 0M3 9q5-4.500 10 0M5.200 11.200q2.800-2.500 5.600 0" fill="none" stroke="#222" stroke-width="1.200"/><circle cx="8" cy="13.200" r="1.300" fill="#222"/></svg>
      <svg class="i16" viewBox="0 0 16 16"><path d="M1 5.800h3L7.500 3v10L4 10.200H1z" fill="none" stroke="#222" stroke-width="1.200"/><path d="M10.500 5.800l4.500 4.500M15 5.800l-4.500 4.500" stroke="#222" stroke-width="1.200"/></svg>
      <svg class="i20" viewBox="0 0 20 16"><rect x="1" y="4" width="16.500" height="10" rx="2.500" fill="#f2ecd8" stroke="#222" stroke-width="1.200"/><rect x="2.500" y="5.500" width="13.500" height="7" rx="1" fill="#12831a"/><path d="M18.500 7.500v3" stroke="#222" stroke-width="1.500"/><path d="M10.500 0 6.500 6h3l-1 4 4.500-6h-3z" fill="#222" stroke="#f2ecd8" stroke-width=".5"/></svg>
      <span class="clock">16:55<br>18.05.2026</span>
    </div>
  </div>
</div>
</body>
</html>
```
FILE: styles.css
```css
* { box-sizing: border-box; }
body { margin: 0; font: 12px/16px "Open Sans", "Noto Sans", sans-serif; color: #1a1a1a; }
a { color: inherit; text-decoration: none; }
button, input, select { font: inherit; color: inherit; }
h1, h2, p, ul { margin: 0; padding: 0; font-weight: 400; }
svg { flex: none; }
.sprite { position: absolute; width: 0; height: 0; }
.ib { display: inline-flex; align-items: center; justify-content: center; border: 0; background: none; padding: 0; }
.push { margin-left: auto; }
.i8 { width: 8px; height: 8px; }
.i10 { width: 10px; height: 10px; }
.i12 { width: 12px; height: 12px; }
.i14 { width: 14px; height: 14px; }
.i16 { width: 16px; height: 16px; }
.i18 { width: 18px; height: 18px; }
.i20 { width: 20px; height: 20px; }
.i24 { width: 24px; height: 24px; }
.dim { color: #aaa; }

.desktop { position: relative; min-height: 100vh; display: flex; flex-direction: column; }

/* File explorer */
.explorer { flex: 1; display: flex; flex-direction: column; background: #fff; }
.ex-tabs { display: flex; height: 32px; padding-left: 8px; background: #e8e8e8; }
.ex-tab { display: flex; align-items: center; gap: 10px; width: 240px; margin-top: 2px; padding: 0 16px 0 9px; border-radius: 8px 8px 0 0; background: #f7f7f7; font-weight: 600; font-size: 11px; }
.ex-plus { width: 46px; }
.ex-winbtns { display: flex; margin-left: auto; color: #888; }
.ex-winbtns .ib { width: 46px; height: 28px; }
.ex-nav { display: flex; align-items: center; height: 49px; padding-right: 11px; background: #f7f7f7; border-bottom: 1px solid #d2d2d2; }
.ex-arrows { display: flex; width: 202px; padding-left: 3px; }
.ex-arrows .ib { width: 48px; height: 32px; }
.ex-path { flex: 1; display: flex; align-items: center; gap: 18px; height: 32px; padding-left: 2px; background: #fcfcfc; border-radius: 4px; font-size: 13px; }
.chip { display: flex; align-items: center; gap: 8px; height: 24px; padding: 0 9px 0 8px; margin-right: -7px; background: #f2f2f2; border-radius: 4px; }
.crumb { width: 8px; height: 12px; color: #555; }
.ex-search { display: flex; align-items: center; width: 498px; height: 32px; margin-left: 8px; padding: 0 12px 0 15px; background: #fcfcfc; border-radius: 4px; font-size: 13px; }
.ex-search input { flex: 1; border: 0; background: none; padding: 0; }
.ex-search input::placeholder, .tsearch input::placeholder { color: #5c5c5c; opacity: 1; }
.ex-cmd { display: flex; align-items: center; height: 47px; padding-top: 2px; border-bottom: 1px solid #d9d9d9; }
.create { gap: 8px; padding-left: 17px; }
.create .i8 { margin-left: -3px; }
.sep { width: 1px; height: 30px; margin-left: 14px; background: #ececec; }
.ex-tools { display: flex; gap: 32px; padding-left: 18px; }
.details { gap: 7px; margin: 0 21px 0 auto; }
.ex-body { flex: 1; display: flex; }
.ex-tree { width: 159px; padding: 6px 0; border-right: 1px solid #f0f0f0; color: #000; }
.ex-tree a { display: flex; align-items: center; height: 32px; padding: 0 4px 0 34px; white-space: nowrap; }
.ex-tree span { margin-left: 4px; }
.ex-tree .branch { padding: 0 1px 0 13px; }
.ex-tree .deep { padding-left: 21px; }
.ex-tree .tw + svg { margin-left: 13px; }
.ex-tree .deep .tw + svg { margin-left: 12px; }
.ex-tree .current { margin: 0 2px; padding: 0 1px 0 31px; background: #d9d9d9; border: 1px solid #999; }
.ex-tree hr { height: 1px; margin: 15px 10px 16px; border: 0; background: #d5d5d5; }
.tw { width: 8px; height: 12px; color: #777; }
.tw.open { transform: rotate(90deg); color: #222; }
.pin { width: 11px; height: 11px; margin-left: auto; }
.ex-files { padding: 5px 0 0 49px; list-style: none; color: #000; }
.ex-files li { display: flex; align-items: center; gap: 4px; height: 33px; }
.ex-files svg { width: 12px; height: 16px; }
.ex-status { display: flex; align-items: center; height: 24px; padding: 0 9px 0 14px; font-size: 11px; }
.views { display: flex; gap: 12px; margin-left: auto; }

/* Browser window */
.chrome { position: absolute; left: 254px; right: 254px; top: 94px; bottom: 128px; display: flex; flex-direction: column; overflow: hidden; background: #fff; border-radius: 8px; box-shadow: 0 0 0 1px #a9abae, 0 20px 48px rgba(0,0,0,.38), 0 4px 24px rgba(0,0,0,.16); }
.ch-strip { flex: none; display: flex; height: 39px; padding: 5px 0 0 6px; background: #d3e3fd; }
.ch-menu { width: 28px; height: 28px; border-radius: 10px; background: #e9f0fe; }
.ch-tab { display: flex; align-items: center; gap: 8px; width: 232px; margin-left: 6px; padding: 0 10px 4px 8px; background: #fff; border-radius: 10px 10px 0 0; white-space: nowrap; font-size: 11px; }
.ch-plus { width: 40px; height: 28px; }
.ch-winbtns { display: flex; margin-left: auto; }
.ch-winbtns .ib { width: 46px; height: 28px; }
.ch-bar { flex: none; display: flex; align-items: center; height: 47px; padding-right: 15px; color: #444; }
.ch-arrows { display: flex; width: 122px; padding-left: 5px; }
.ch-arrows .ib { width: 36px; height: 34px; }
.ch-url { flex: 1; display: flex; align-items: center; height: 34px; padding: 0 16px 0 4px; background: #ecf1fa; border-radius: 17px; font-size: 13px; }
.tune { display: grid; place-items: center; width: 24px; height: 24px; border-radius: 12px; background: #fff; }
.addr { margin-left: 8px; color: #1f1f1f; }
.addr i { font-style: normal; color: #474747; }
.ch-ext { display: flex; align-items: center; gap: 18px; padding-left: 16px; }
.vsep { width: 2px; height: 16px; background: #d3e3fd; }
.ch-marks { flex: none; display: flex; align-items: center; gap: 14px; height: 34px; padding: 0 14px 6px 13px; border-bottom: 1px solid #dfe1e5; color: #474747; font-size: 11px; white-space: nowrap; }
.marks { display: flex; gap: 20px; }
.ch-marks a { display: flex; align-items: center; gap: 6px; }
.more { margin-right: 4px; }
.ch-marks .all { gap: 9px; }

/* FlorHub application */
.page { flex: 1; display: flex; background: #f4f6f9; color: #212529; font: 13px/20px "Noto Sans CJK SC", "Noto Sans", sans-serif; }
.side { position: relative; z-index: 1; width: 250px; background: #343a40; color: #c2c7d0; box-shadow: 0 14px 28px rgba(0,0,0,.25), 0 10px 10px rgba(0,0,0,.22); }
.brand { display: block; height: 48px; padding: 13px 0; border-bottom: 1px solid #4b545c; text-align: center; }
.ver { font-size: 11px; }
.user { display: flex; align-items: center; gap: 7px; height: 64px; margin: 0 8px 12px; padding-left: 9px; border-bottom: 1px solid #4f5962; color: #ffc107; font-weight: 700; white-space: nowrap; }
.menu h2 { height: 37px; padding: 8px 12px; font-size: 13px; line-height: 20px; }
.menu a { display: flex; align-items: center; height: 34px; padding: 0 16px 0 23px; white-space: nowrap; }
.ic { width: 18px; height: 18px; margin: 0 9px 4px 3px; }
.ic.wide { width: 22px; margin: 0 8px 4px 0; }
.ang { width: 8px; height: 12px; margin-left: auto; }
.ang.down { transform: rotate(-90deg); }
.green { color: #28a745; }
.gray { color: #6c757d; }
.red { color: #dc3545; }
.yellow { color: #ffc107; }
.teal { color: #17a2b8; }
.menu .active { background: #007bff; color: #fff; }
.menu .active .teal { color: #17a2b8; }
.sub { padding-left: 8px; background: #3f444a; }
.menu .sub a { padding-left: 28px; border-left: 3px solid #c2c7d0; }
.menu .sub .here { background: #ebecec; border-color: #fff; color: #343a40; }
.badge { margin-left: auto; padding: 0 4px; border-radius: 4px; color: #fff; font-size: 10px; line-height: 15px; font-weight: 700; }
.success { background: #28a745; }
.teal-bg { background: #17a2b8; }

.main { flex: 1; display: flex; flex-direction: column; min-width: 0; }
.top { display: flex; align-items: center; height: 48px; padding: 0 24px 0 23px; background: #fff; border-bottom: 1px solid #dee2e6; }
.rule { width: 1px; height: 31px; margin-left: 15px; background: #dee2e6; }
.exit { display: flex; align-items: center; gap: 7px; margin-left: auto; color: #dc3545; font-weight: 700; }
.content { flex: 1; padding: 5px 15px 24px 16px; }
h1 { padding-left: 8px; font-size: 22px; line-height: 36px; margin-bottom: 8px; }
.card { background: #fff; border-radius: 4px; box-shadow: 0 1px 3px rgba(0,0,0,.13); }
.filter { display: grid; grid-template-columns: repeat(4, 1fr); gap: 15px; padding: 20px; margin-bottom: 24px; min-height: 131px; border-top: 3px solid #17a2b8; align-items: start; }
.field { display: grid; gap: 9px; }
.field label { font-weight: 700; }
.field select, .field input { width: 100%; height: 38px; padding: 0 12px; border: 1px solid #ced4da; border-radius: 4px; background: #fff; color: #495057; font-size: 14px; }
.date { position: relative; }
.date svg { position: absolute; right: 16px; top: 10px; width: 14px; height: 16px; }
.go { height: 35px; margin-top: 37px; border: 0; border-radius: 4px; background: #17a2b8; color: #fff; font-weight: 500; box-shadow: 0 2px 4px rgba(0,0,0,.08); }
.find { display: flex; justify-content: flex-end; align-items: center; gap: 8px; margin-bottom: 14px; }
.find input { width: 174px; height: 31px; border: 1px solid #ced4da; border-radius: 4px; background: #fff; }
table { width: 100%; table-layout: fixed; border-collapse: collapse; }
.c1 { width: 23.8%; } .c2 { width: 9.5%; } .c3 { width: 10.3%; } .c4 { width: 7.7%; } .c5 { width: 8%; } .c6 { width: 8.1%; } .c7 { width: 9.2%; } .c8 { width: 13.4%; } .c9 { width: 10%; }
th, td { border: 1px solid #dee2e6; padding: 4px 5px; line-height: 22px; text-align: center; vertical-align: top; }
th { position: relative; padding: 5px 20px 5px 5px; border-width: 2px 1px; background: #f8f9fa; vertical-align: middle; font-weight: 700; white-space: nowrap; }
th.lead { padding-left: 24px; }
.sort { position: absolute; right: 8px; top: 12px; width: 13px; height: 9px; opacity: .3; }
.sort.asc { opacity: 1; }
.name { padding-left: 24px; text-align: left; }
.name b, .name small { display: block; }
small { color: #869099; font-size: 10px; }
.in { color: #28a745; }
.out { color: #007bff; }
.loss { color: #dc3545; }
.sum { text-align: right; }
td.end { padding-right: 24px; background: #f8f9fa; font-weight: 700; }
th.end { padding-right: 24px; }
.info { margin-top: 17px; }
.pager { display: flex; justify-content: flex-end; padding: 2px 0; }
.pager button { height: 36px; padding: 0 10px; border: 1px solid #dee2e6; background: #fff; color: #6c757d; }
.pager .on { padding: 0 12px; background: #007bff; border-color: #007bff; color: #fff; }
.pager button:first-child { border-radius: 4px 0 0 4px; border-right: 0; }
.pager button:last-child { border-radius: 0 4px 4px 0; border-left: 0; }
.foot { display: flex; justify-content: space-between; align-items: center; height: 48px; padding: 0 13px; background: #fff; border-top: 1px solid #dee2e6; color: #869099; }

/* Taskbar */
.taskbar { position: relative; display: flex; align-items: center; justify-content: space-between; height: 47px; padding: 0 18px 0 21px; border-top: 1px solid #b8aea8; background: linear-gradient(90deg, #e3e3dc 0%, #e6e6c4 4%, #dbe3dc 9%, #ecddd4 16%, #efdccf 33%, #efdccf 53%, #ebe7a5 57%, #dcdccb 60%, #ead8cf 63%, #e9e79a 67%, #e8ec98 70%, #e9dccb 73%, #e9d9d0 78%, #fae6d6 83%, #f0e6be 94%, #eed9bd 100%); font-size: 11px; }
.weather { display: flex; align-items: center; gap: 9px; }
.tasks { position: absolute; left: 50%; transform: translateX(-50%); display: flex; align-items: center; gap: 6px; padding-left: 2px; }
.task { position: relative; display: grid; place-items: center; width: 38px; height: 40px; padding: 0; border: 0; border-radius: 4px; background: none; }
.front { background: rgba(255,255,255,.6); box-shadow: 0 0 0 1px rgba(0,0,0,.08); }
.run::after { content: ""; position: absolute; left: 50%; bottom: 0; width: 6px; height: 3px; margin-left: -3px; border-radius: 2px; background: #84807c; }
.front::after { width: 16px; margin-left: -8px; background: #0067c0; }
.tsearch { display: flex; align-items: center; gap: 11px; width: 218px; height: 31px; padding: 0 3px 0 11px; border-radius: 16px; background: #faf4f0; box-shadow: 0 0 0 1px rgba(0,0,0,.08); font-size: 13px; }
.tsearch input { flex: 1; min-width: 0; border: 0; padding: 0; background: none; }
.castle { width: 50px; height: 24px; }
.tray { display: flex; align-items: center; gap: 8px; }
.onedrive { margin-left: 9px; }
.lang { margin: 0 11px 0 9px; }
.clock { text-align: right; margin-left: 8px; }
```
